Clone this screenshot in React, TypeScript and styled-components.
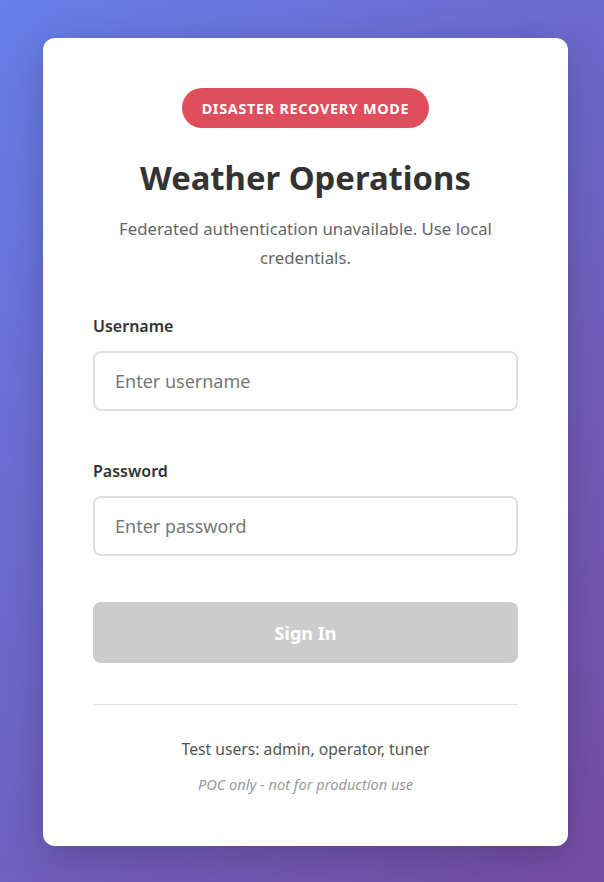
import React from "react";
import styled, { createGlobalStyle } from "styled-components";

const Global = createGlobalStyle`
  * { box-sizing: border-box; }
  html, body { margin: 0; padding: 0; }
  body {
    font-family: "Noto Sans", "Open Sans", sans-serif;
    background: linear-gradient(135deg, #667eea 0%, #764ba2 100%);
    min-height: 882px;
  }
`;

const Page = styled.div`
  min-height: 882px;
  display: flex;
  justify-content: center;
  padding: 38px 36px 36px 43px;
`;

const Card = styled.div`
  width: 525px;
  height: 808px;
  background: #fff;
  border-radius: 12px;
  box-shadow: 0 10px 40px rgba(0, 0, 0, 0.2);
  padding: 50px 50px 0;
  display: flex;
  flex-direction: column;
  align-items: stretch;
`;

const Header = styled.div`
  display: flex;
  flex-direction: column;
  align-items: center;
  text-align: center;
`;

const Badge = styled.div`
  height: 40px;
  padding: 0 20px;
  border-radius: 20px;
  background: #e04d5d;
  color: #fff;
  font-size: 14.4px;
  font-weight: 700;
  letter-spacing: 0.7px;
  text-transform: uppercase;
  display: flex;
  align-items: center;
`;

const Title = styled.h1`
  margin: 30px 0 0;
  font-size: 32.8px;
  line-height: 40px;
  font-weight: 700;
  color: #333;
`;

const Subtitle = styled.p`
  margin: 16px 0 0;
  font-size: 16.8px;
  line-height: 29px;
  color: #666;
`;

const Form = styled.form`
  display: flex;
  flex-direction: column;
  margin-top: 43px;
`;

const Field = styled.div<{ $gap?: number }>`
  display: flex;
  flex-direction: column;
  margin-top: ${(p) => p.$gap ?? 0}px;
`;

const Label = styled.label`
  font-size: 16px;
  line-height: 22px;
  font-weight: 600;
  color: #333;
  margin-bottom: 14px;
`;

const Input = styled.input`
  height: 60px;
  width: 100%;
  border: 2px solid #e0e0e0;
  border-radius: 8px;
  padding: 0 20px;
  font-family: inherit;
  font-size: 18px;
  color: #333;
  outline: none;
  &::placeholder { color: #777; }
`;

const Button = styled.button`
  margin-top: 46px;
  height: 61px;
  border: none;
  border-radius: 8px;
  background: #cccccc;
  color: #fff;
  font-family: inherit;
  font-size: 18px;
  font-weight: 700;
  cursor: not-allowed;
`;

const Divider = styled.hr`
  margin: 41px 0 0;
  border: none;
  border-top: 1px solid #e0e0e0;
`;

const Footer = styled.div`
  display: flex;
  flex-direction: column;
  align-items: center;
  text-align: center;
  margin-top: 34px;
`;

const Users = styled.div`
  font-size: 15.7px;
  line-height: 20px;
  color: #555;
`;

const Note = styled.div`
  margin-top: 16px;
  font-size: 14.6px;
  line-height: 18px;
  font-style: italic;
  color: #999;
`;

export default function App() {
  return (
    <>
      <Global />
      <Page>
        <Card>
          <Header>
            <Badge>Disaster Recovery Mode</Badge>
            <Title>Weather Operations</Title>
            <Subtitle>
              Federated authentication unavailable. Use local
              <br />
              credentials.
            </Subtitle>
          </Header>
          <Form onSubmit={(e) => e.preventDefault()}>
            <Field>
              <Label htmlFor="u">Username</Label>
              <Input id="u" placeholder="Enter username" />
            </Field>
            <Field $gap={49}>
              <Label htmlFor="p">Password</Label>
              <Input id="p" type="password" placeholder="Enter password" />
            </Field>
            <Button type="submit" disabled>
              Sign In
            </Button>
          </Form>
          <Divider />
          <Footer>
            <Users>Test users: admin, operator, tuner</Users>
            <Note>POC only - not for production use</Note>
          </Footer>
        </Card>
      </Page>
    </>
  );
}
